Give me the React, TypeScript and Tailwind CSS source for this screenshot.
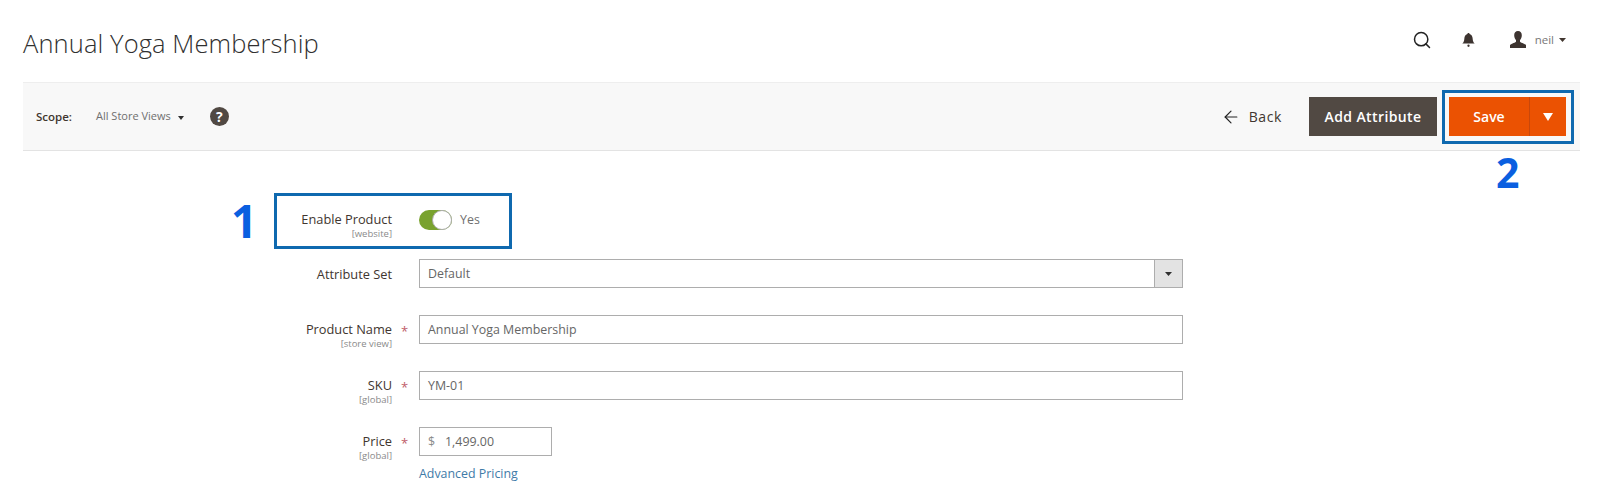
import { Search, ArrowLeft } from "lucide-react";

const font = "font-['Open_Sans',sans-serif]";

function Caret({ className }: { className: string }) {
  return (
    <svg viewBox="0 0 10 6" preserveAspectRatio="none" className={className} fill="currentColor">
      <path d="M0 0h10L5 6z" />
    </svg>
  );
}

function Row({
  label,
  scope,
  required,
  labelClass = "pt-[6px]",
  className,
  children,
}: {
  label: string;
  scope?: string;
  required?: boolean;
  labelClass?: string;
  className: string;
  children: React.ReactNode;
}) {
  return (
    <div className={`flex items-start ${className}`}>
      <div className="w-[392px] text-right">
        <div className={`text-[12.8px] leading-[17px] font-medium text-[#41362f] ${labelClass}`}>{label}</div>
        {scope && <div className="text-[9.5px] leading-[12px] text-[#8a8a8a]">{scope}</div>}
      </div>
      <div className="w-[27px] pl-[9px] pt-[8px] text-[13px] leading-[17px] text-[#c0606a]">{required ? "*" : ""}</div>
      {children}
    </div>
  );
}

export default function App() {
  return (
    <div className={`relative w-[1600px] h-[490px] bg-white overflow-hidden ${font}`}>
      {/* page title and user actions */}
      <header className="h-[82px] pl-[23px] pr-[34px] flex items-center justify-between">
        <h1 className="text-[25.5px] font-light text-[#303030] tracking-[0.1px] mt-[5px]">Annual Yoga Membership</h1>
        <div className="flex items-center pb-[3px]">
          <Search className="w-[20px] h-[20px] text-[#222]" strokeWidth={1.8} />
          <svg viewBox="0 0 16 18" className="w-[15px] h-[16px] ml-[29px] text-[#3d3430]" fill="currentColor">
            <path d="M8 1c.8 0 1.2.5 1.3 1.2C11.6 3 12.6 5 12.7 7.5c.1 2.600.8 4 2.300 5.500H1c1.500-1.500 2.200-2.900 2.300-5.500C3.400 5 4.400 3 6.700 2.200 6.800 1.500 7.200 1 8 1z" />
            <circle cx="8" cy="15.500" r="1.300" />
          </svg>
          <svg viewBox="0 0 18 17" className="w-[18px] h-[17px] ml-[33px] text-[#3d3430]" fill="currentColor">
            <path d="M9 0c2.500 0 3.800 1.700 3.800 4.200 0 2-.8 3.800-1.800 4.800v1.500c0 1 4.500 2 6 3.500V17H1v-3c1.500-1.500 6-2.500 6-3.500V9C6 8 5.200 6.200 5.200 4.200 5.200 1.700 6.500 0 9 0z" />
          </svg>
          <span className="ml-[8px] text-[11.5px] text-[#777]">neil</span>
          <Caret className="w-[7px] h-[4px] ml-[5px] text-[#41362f]" />
        </div>
      </header>

      {/* scope toolbar */}
      <div className="ml-[23px] w-[1557px] h-[69px] bg-[#f8f8f8] border-t border-[#eeeeee] border-b border-b-[#e3e3e3] flex items-center pl-[13px] pr-[14px]">
        <span className="text-[11.5px] font-semibold text-[#41362f]">Scope:</span>
        <span className="ml-[24px] text-[11px] text-[#6f6f6f]">All Store Views</span>
        <Caret className="w-[6px] h-[4px] ml-[7px] mt-[2px] text-[#303030]" />
        <span className="ml-[26px] w-[19px] h-[19px] rounded-full bg-[#514943] text-white text-[14px] leading-[19px] font-bold text-center">?</span>
        <button className="ml-auto flex items-center text-[14px] tracking-[0.6px] text-[#41362f]">
          <ArrowLeft className="w-[20px] h-[20px] text-[#222] mr-[8px]" strokeWidth={1.4} />
          Back
        </button>
        <button className="ml-[27px] w-[128px] h-[39px] bg-[#514943] text-white text-[14px] font-semibold tracking-[0.4px]">Add Attribute</button>
        <div className="ml-[12px] w-[117px] h-[39px] bg-[#eb5202] flex text-white">
          <span className="w-[81px] border-r border-[#c9470a] text-[14px] font-semibold leading-[39px] text-center">Save</span>
          <span className="flex-1 flex items-center justify-center">
            <Caret className="w-[10px] h-[8px] text-white" />
          </span>
        </div>
      </div>

      {/* product form */}
      <form className="text-[12.4px]">
        <Row label="Enable Product" scope="[website]" className="mt-[54px]">
          <div className="flex items-center pt-[5px]">
            <span className="w-[33px] h-[20px] rounded-full bg-[#79a22e] flex justify-end">
              <span className="w-[20px] h-[20px] rounded-full bg-white border border-[#adadad]" />
            </span>
            <span className="ml-[8px] text-[#6f6f6f]">Yes</span>
          </div>
        </Row>
        <Row label="Attribute Set" labelClass="pt-[7px]" className="mt-[19px]">
          <div className="w-[764px] h-[29px] border border-[#adadad] flex items-center justify-between bg-white">
            <span className="pl-[8px] pt-[2px] text-[#666]">Default</span>
            <span className="w-[28px] h-full bg-[#e3e3e3] border-l border-[#adadad] flex items-center justify-center">
              <Caret className="w-[7px] h-[4px] text-[#303030]" />
            </span>
          </div>
        </Row>
        <Row label="Product Name" scope="[store view]" required className="mt-[27px]">
          <div className="w-[764px] h-[29px] border border-[#adadad] pl-[8px] leading-[27px] text-[#666]">Annual Yoga Membership</div>
        </Row>
        <Row label="SKU" scope="[global]" required className="mt-[21px]">
          <div className="w-[764px] h-[29px] border border-[#adadad] pl-[8px] leading-[27px] text-[#666]">YM-01</div>
        </Row>
        <Row label="Price" scope="[global]" required className="mt-[21px]">
          <div>
            <div className="w-[133px] h-[29px] border border-[#adadad] pl-[8px] leading-[27px] text-[#666] flex">
              <span className="w-[17px] text-[#8a8a8a]">$</span>
              <span>1,499.00</span>
            </div>
            <a className="block mt-[9px] text-[#3f7ba8]">Advanced Pricing</a>
          </div>
        </Row>
      </form>

      {/* annotation overlays */}
      <div className="absolute left-[274px] top-[193px] w-[238px] h-[56px] border-[3px] border-[#0f69af]" />
      <div className="absolute left-[1442px] top-[90px] w-[132px] h-[54px] border-[3px] border-[#0f69af]" />
      <span className="absolute left-[231px] top-[192px] text-[46px] leading-[56px] font-bold text-[#0a5fe0]">1</span>
      <span className="absolute left-[1496px] top-[144px] text-[41px] leading-[56px] font-bold text-[#0a5fe0]">2</span>
    </div>
  );
}
